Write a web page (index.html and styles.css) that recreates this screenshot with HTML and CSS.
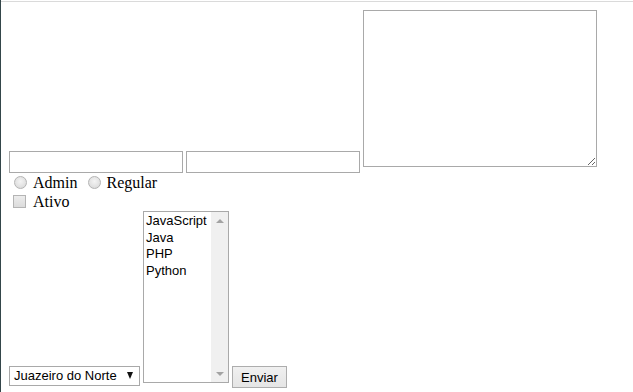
FILE: index.html
```html
<!DOCTYPE html>
<html lang="pt">
<head>
<meta charset="utf-8">
<title>Formulário</title>
<link rel="stylesheet" href="styles.css">
</head>
<body>
<div class="page">
  <div class="topline"></div>
  <form class="form">
    <div class="row row-text">
      <input class="field" type="text">
      <input class="field" type="text">
      <textarea class="area"></textarea>
    </div>
    <div class="row row-opt">
      <input class="radio" type="radio" name="tipo" id="r1"><label class="lbl lbl-admin" for="r1">Admin</label>
      <input class="radio radio-2" type="radio" name="tipo" id="r2"><label class="lbl lbl-reg" for="r2">Regular</label>
    </div>
    <div class="row row-opt">
      <input class="check" type="checkbox" id="c1"><label class="lbl lbl-ativo" for="c1">Ativo</label>
    </div>
    <div class="row row-bottom">
      <div class="select">
        <span class="select-text">Juazeiro do Norte</span>
        <span class="select-arrow"></span>
      </div>
      <div class="listbox" role="listbox">
        <ul class="options">
          <li>JavaScript</li>
          <li>Java</li>
          <li>PHP</li>
          <li>Python</li>
        </ul>
        <div class="scrollbar">
          <span class="sb-up"></span>
          <span class="sb-down"></span>
        </div>
      </div>
      <button class="btn" type="button">Enviar</button>
    </div>
  </form>
</div>
</body>
</html>
```

FILE: styles.css
```css
html, body {
  margin: 0;
  padding: 0;
  background: #ffffff;
}

.page {
  border-left: 1px solid #34464a;
  height: 392px;
  box-sizing: border-box;
  padding-top: 1px;
}

.topline {
  height: 1px;
  background: #dadada;
}

.form {
  padding: 8px;
  font-family: "Liberation Sans", Arial, sans-serif;
  font-size: 13px;
  color: #000;
}

.row {
  display: flex;
}

.row-text {
  align-items: flex-end;
  gap: 3px;
}

.field {
  appearance: none;
  box-sizing: border-box;
  width: 174px;
  height: 22px;
  margin: 0;
  border: 1px solid #a9a9a9;
  background: #fff;
  padding: 1px 2px;
  font: inherit;
}

.area {
  box-sizing: border-box;
  width: 234px;
  height: 157px;
  margin: 0 0 6px 0;
  border: 1px solid #a9a9a9;
  padding: 2px;
  font: inherit;
  background: #fff;
}

.row-opt {
  height: 19px;
  align-items: flex-start;
  font-family: "Liberation Serif", "Times New Roman", serif;
  font-size: 16px;
  line-height: 19px;
}

.radio {
  appearance: none;
  width: 13px;
  height: 13px;
  margin: 3px 0 0 5px;
  border: 1px solid #b4b4b4;
  border-radius: 50%;
  box-sizing: border-box;
  background: radial-gradient(circle at 50% 40%, #f4f4f4 0%, #e2e2e2 60%, #d4d4d4 100%);
}

.radio-2 {
  margin-left: 11px;
}

.check {
  appearance: none;
  width: 13px;
  height: 13px;
  margin: 3px 0 0 4px;
  border: 1px solid #b4b4b4;
  box-sizing: border-box;
  background: linear-gradient(#ececec, #dcdcdc);
}

.lbl {
  margin-left: 6px;
}

.lbl-reg {
  margin-left: 5px;
}

.lbl-ativo {
  margin-left: 7px;
}

.row-bottom {
  align-items: flex-end;
  gap: 3px;
}

.select {
  box-sizing: border-box;
  width: 131px;
  height: 20px;
  margin-bottom: 2px;
  border: 1px solid #a9a9a9;
  background: #fff;
  display: flex;
  align-items: center;
  padding: 0 6px 0 4px;
  line-height: 16px;
}

.select-text {
  flex: 1;
  white-space: nowrap;
}

.select-arrow {
  width: 0;
  height: 0;
  border-left: 3px solid transparent;
  border-right: 3px solid transparent;
  border-top: 7px solid #111;
  margin-top: -2px;
}

.listbox {
  box-sizing: border-box;
  width: 86px;
  height: 172px;
  margin-bottom: 5px;
  border: 1px solid #a9a9a9;
  background: #fff;
  display: flex;
}

.options {
  flex: 1;
  list-style: none;
  margin: 0;
  padding: 1px 0 0 2px;
  line-height: 16.5px;
}

.scrollbar {
  width: 17px;
  background: #f0f0f0;
  display: flex;
  flex-direction: column;
  justify-content: space-between;
  align-items: center;
  padding: 7px 0 6px;
}

.sb-up,
.sb-down {
  width: 0;
  height: 0;
  border-left: 4px solid transparent;
  border-right: 4px solid transparent;
}

.sb-up {
  border-bottom: 4px solid #a3a3a3;
}

.sb-down {
  border-top: 4px solid #a3a3a3;
}

.btn {
  appearance: none;
  box-sizing: border-box;
  width: 55px;
  height: 22px;
  margin: 0;
  padding: 0;
  border: 1px solid #adadad;
  background: linear-gradient(#f0f0f0, #e5e5e5);
  font-family: "Liberation Sans", Arial, sans-serif;
  font-size: 13px;
  color: #000;
}
```
